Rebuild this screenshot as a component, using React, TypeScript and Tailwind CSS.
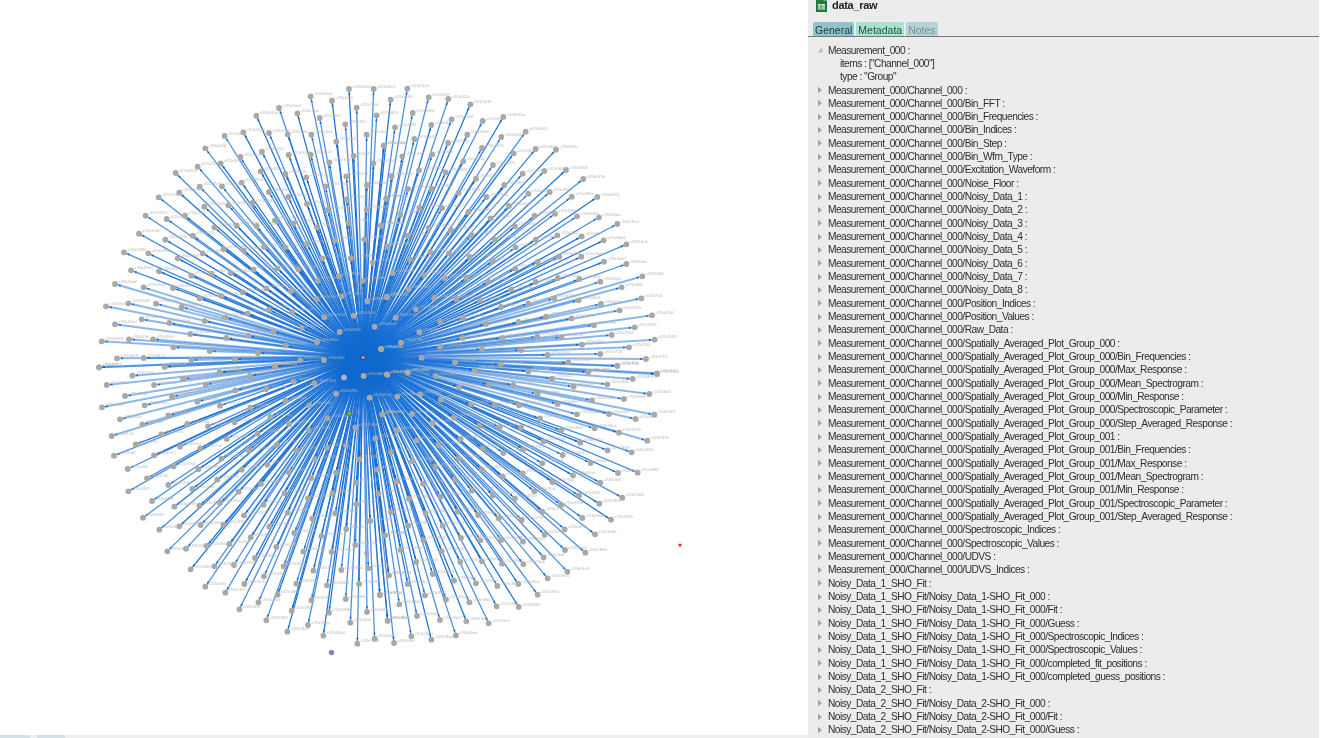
import React from 'react';

// node positions read off the graph, in 3x crop coordinates, one list per quadrant
const quadrants: { ox: number; oy: number; pts: number[] }[] = [
  {
    ox: 90,
    oy: 75,
    pts: [777,42,851,42,662,64,726,77,800,98,567,99,622,115,689,129,860,121,499,122,766,148,537,174,593,178,664,179,830,179,460,172,404,183,739,200,882,212,346,220,516,230,596,240,662,239,451,246,791,243,718,262,850,265,392,265,323,275,257,294,512,289,586,297,769,304,649,307,706,334,831,330,455,323,396,334,329,335,268,353,206,367,537,351,595,366,770,373,889,371,487,384,651,387,415,391,343,395,167,422,230,432,285,422,713,405,830,403,555,436,610,445,776,443,440,452,500,453,373,457,681,457,873,452,147,476,226,494,309,482,735,496,823,493,522,516,461,526,401,522,586,517,651,507,892,514,102,532,175,535,263,550,338,535,697,550,782,550,848,563,123,586,207,589,304,602,364,596,422,594,491,584,562,580,625,583,75,627,161,637,249,639,529,640,603,648,683,617,747,603,818,617,459,652,394,663,329,670,755,664,680,672,890,666,832,678,48,694,115,685,198,686,275,696,606,711,537,704,473,715,406,727,344,738,703,727,791,722,155,733,238,744,75,748,854,755,635,759,550,769,749,771,475,782,409,789,301,777,117,793,189,793,35,799,250,817,359,828,504,834,587,812,681,801,874,822,81,850,161,849,304,855,435,853,631,856,702,855,27,877,224,875,555,874,389,892],
  },
  {
    ox: 380,
    oy: 75,
    pts: [82,41,32,74,146,67,205,72,271,88,98,114,308,138,370,126,215,133,45,157,154,150,437,170,103,192,262,179,364,186,11,212,204,204,306,219,467,222,528,224,157,238,67,244,401,235,250,259,339,270,558,285,493,288,117,286,197,292,35,303,428,296,288,311,610,312,509,351,373,330,84,342,155,341,236,353,445,356,575,365,652,366,19,371,319,366,118,399,186,399,387,393,61,419,265,411,525,416,464,422,591,424,657,427,332,430,4,452,146,459,405,454,712,447,213,465,83,483,275,480,532,481,605,484,344,494,467,494,671,496,739,508,23,514,151,531,207,535,407,517,269,546,90,553,339,558,538,545,604,545,473,561,672,560,739,567,133,601,38,594,195,609,259,608,325,619,406,581,534,609,467,621,598,612,661,620,787,604,725,637,394,643,86,643,21,665,163,669,229,672,301,676,445,685,523,670,596,676,663,687,784,670,363,696,108,703,719,706,47,728,181,741,250,729,318,747,416,741,498,725,575,730,816,721,642,751,764,757,118,771,63,803,248,789,367,789,472,785,545,787,695,780,824,794,606,809,180,815,307,822,423,825,747,817,503,840,661,837,125,848,798,852,3,822,225,862,362,868,565,862,712,872,285,884,445,889,625,891,831,895,83,892,21,898],
  },
  {
    ox: 90,
    oy: 365,
    pts: [27,7,224,5,556,5,127,32,50,60,192,60,279,42,347,59,389,22,480,32,611,50,673,55,105,93,246,95,436,76,529,72,738,86,36,127,164,121,322,110,390,122,481,128,586,106,658,121,839,98,90,163,157,178,235,151,292,177,354,184,434,172,541,156,597,177,712,160,878,148,65,213,137,238,214,208,270,245,331,250,410,222,503,206,561,239,656,196,796,188,856,220,72,272,113,312,192,271,251,304,394,281,476,256,619,257,711,248,808,283,171,340,235,360,325,313,382,344,455,314,532,299,674,283,596,322,863,314,115,379,186,408,307,372,446,380,513,357,664,339,738,323,799,353,253,425,328,422,390,414,584,384,654,400,727,385,866,386,159,458,208,494,268,484,332,480,400,479,462,451,521,419,593,443,736,445,799,418,841,468,667,461,232,559,288,551,350,543,418,537,482,517,538,485,613,504,694,513,769,492,885,511,796,540,302,613,373,604,432,600,495,579,559,546,640,560,725,561,346,665,406,683,463,657,522,634,581,604,670,617,754,615,835,610,896,631,448,733,505,712,563,689,619,656,711,661,807,657,869,690,529,766,605,737,664,706,767,702,717,743,831,741,893,767,592,800,654,780,781,773,700,812,802,836,854,821,821,33,892,29],
  },
  {
    ox: 380,
    oy: 365,
    pts: [84,23,167,33,285,15,445,19,625,21,831,28,712,3,516,41,758,42,237,67,327,58,400,60,581,65,682,58,808,87,732,102,473,87,636,106,52,95,121,88,183,104,274,118,344,120,417,121,533,117,591,148,687,147,767,162,823,149,7,148,96,147,222,158,480,160,158,174,298,183,359,187,423,188,544,196,644,190,717,203,802,227,50,196,110,226,175,240,242,222,491,229,601,233,683,256,755,262,33,261,308,250,370,264,430,253,548,270,96,289,236,281,487,295,632,294,714,324,773,323,166,306,305,314,368,334,428,325,579,331,517,351,661,353,50,349,129,356,225,344,275,377,338,392,405,401,463,379,597,392,727,398,658,416,87,402,182,395,33,441,137,445,233,440,294,450,356,460,425,465,487,440,543,420,607,459,693,464,84,482,188,482,15,511,130,526,243,519,301,526,364,525,429,530,494,509,554,493,645,508,62,555,185,559,241,591,306,589,366,596,430,598,491,577,555,555,616,563,109,591,27,631,158,627,222,647,288,655,352,663,415,657,503,640,562,620,83,657,0,690,135,691,198,704,268,712,350,724,416,726,473,689,58,718,23,767,111,753,180,765,259,769,326,775,94,814,154,824,228,811,42,834],
  },
];

const nodes: { x: number; y: number }[] = [];
quadrants.forEach((q) => {
  for (let i = 0; i < q.pts.length; i += 2) {
    nodes.push({ x: q.ox + q.pts[i] / 3, y: q.oy + q.pts[i + 1] / 3 });
  }
});

const HUB = { x: 363, y: 357 };

const NetworkGraph = () => (
  <svg width="808" height="735" viewBox="0 0 808 735" className="block blur-[0.45px]">
    <defs>
      <radialGradient id="hubGlow">
        <stop offset="0.4" stopColor="#0f68cd" />
        <stop offset="1" stopColor="#0f68cd" stopOpacity="0" />
      </radialGradient>
    </defs>
    <g stroke="#1c72d6" fill="none">
      {nodes.map((n, i) => {
        const flat = Math.abs(n.y - HUB.y) / Math.max(Math.abs(n.x - HUB.x), 1) < 0.32;
        return (
          <line
            key={i}
            x1={HUB.x}
            y1={HUB.y}
            x2={n.x}
            y2={n.y}
            strokeWidth={flat ? 2 : 1.25}
            strokeOpacity={flat ? 0.5 : i % 3 === 0 ? 1 : 0.8}
          />
        );
      })}
    </g>
    <circle cx="363" cy="364" r="46" fill="url(#hubGlow)" />
    <g fill="#0f66cc">
      {nodes.map((n, i) => {
        const a = Math.atan2(n.y - HUB.y, n.x - HUB.x);
        const tipX = n.x - 3.2 * Math.cos(a);
        const tipY = n.y - 3.2 * Math.sin(a);
        const bx = tipX - 2.6 * Math.cos(a);
        const by = tipY - 2.6 * Math.sin(a);
        const px = 1.2 * Math.sin(a);
        const py = -1.2 * Math.cos(a);
        return (
          <polygon
            key={i}
            points={`${tipX},${tipY} ${bx + px},${by + py} ${bx - px},${by - py}`}
          />
        );
      })}
    </g>
    <g fill="#a8a8a6">
      {nodes.map((n, i) => (
        <circle key={i} cx={n.x} cy={n.y} r="2.9" />
      ))}
    </g>
    <g fill="#b5b5b5" fontSize="3" fontFamily="'Liberation Sans', sans-serif">
      {nodes.map((n, i) => (
        <text key={i} x={n.x + 3.5} y={n.y - 1.2}>
          {`a7f23e1f${(0x4e00 + i * 37).toString(16)}`}
        </text>
      ))}
    </g>

    {/* highlighted nodes */}
    <circle cx="363" cy="357.5" r="2.4" fill="#9a8fc0" stroke="#0b3f6e" strokeWidth="0.9" />
    <circle cx="344" cy="377.5" r="2.4" fill="#b9a8c8" stroke="#c9c9d8" strokeWidth="0.8" />
    <circle cx="349.5" cy="413.5" r="2.4" fill="#6fbf3a" stroke="#2e7d3c" strokeWidth="0.9" />
    <circle cx="346" cy="446" r="2.4" fill="#b3a5c8" />
    <circle cx="366.5" cy="553" r="2.4" fill="#a59fd0" />
    <circle cx="331.5" cy="652.5" r="2.6" fill="#7d7fc4" stroke="#a5a5c5" strokeWidth="0.7" />
    <circle cx="680" cy="545" r="1.5" fill="#f01818" />
  </svg>
);

const FileIcon = () => (
  <svg width="13" height="13" viewBox="0 0 13 13">
    <path d="M1 -2h7.5l3.5 3.5v11.5h-11z" fill="#1f7a3c" />
    <path d="M8.5 -2v3.5h3.5z" fill="#b7dcc2" />
    <path d="M3 5h7v5.5h-7z" fill="#e9f5ec" />
    <path d="M3 7h7M3 9h7M6 5v5.5" stroke="#1f7a3c" strokeWidth="0.7" />
  </svg>
);

const Arrow = ({ open }: { open?: boolean }) => (
  <svg width="8" height="8" viewBox="0 0 8 8" className="shrink-0">
    {open ? (
      <path d="M6.5 1.5v5h-5z" fill="#b8b8b8" />
    ) : (
      <path d="M2 .8l4 3.2-4 3.2z" fill="#a2a2a2" />
    )}
  </svg>
);

const C = 'Measurement_000/Channel_000';
const S0 = `${C}/Spatially_Averaged_Plot_Group_000`;
const S1 = `${C}/Spatially_Averaged_Plot_Group_001`;
const N1 = 'Noisy_Data_1_SHO_Fit/Noisy_Data_1-SHO_Fit_000';
const N2 = 'Noisy_Data_2_SHO_Fit/Noisy_Data_2-SHO_Fit_000';

const rows = [
  C,
  `${C}/Bin_FFT`,
  `${C}/Bin_Frequencies`,
  `${C}/Bin_Indices`,
  `${C}/Bin_Step`,
  `${C}/Bin_Wfm_Type`,
  `${C}/Excitation_Waveform`,
  `${C}/Noise_Floor`,
  `${C}/Noisy_Data_1`,
  `${C}/Noisy_Data_2`,
  `${C}/Noisy_Data_3`,
  `${C}/Noisy_Data_4`,
  `${C}/Noisy_Data_5`,
  `${C}/Noisy_Data_6`,
  `${C}/Noisy_Data_7`,
  `${C}/Noisy_Data_8`,
  `${C}/Position_Indices`,
  `${C}/Position_Values`,
  `${C}/Raw_Data`,
  S0,
  `${S0}/Bin_Frequencies`,
  `${S0}/Max_Response`,
  `${S0}/Mean_Spectrogram`,
  `${S0}/Min_Response`,
  `${S0}/Spectroscopic_Parameter`,
  `${S0}/Step_Averaged_Response`,
  S1,
  `${S1}/Bin_Frequencies`,
  `${S1}/Max_Response`,
  `${S1}/Mean_Spectrogram`,
  `${S1}/Min_Response`,
  `${S1}/Spectroscopic_Parameter`,
  `${S1}/Step_Averaged_Response`,
  `${C}/Spectroscopic_Indices`,
  `${C}/Spectroscopic_Values`,
  `${C}/UDVS`,
  `${C}/UDVS_Indices`,
  'Noisy_Data_1_SHO_Fit',
  N1,
  `${N1}/Fit`,
  `${N1}/Guess`,
  `${N1}/Spectroscopic_Indices`,
  `${N1}/Spectroscopic_Values`,
  `${N1}/completed_fit_positions`,
  `${N1}/completed_guess_positions`,
  'Noisy_Data_2_SHO_Fit',
  N2,
  `${N2}/Fit`,
  `${N2}/Guess`,
];

const Row = ({ label, open }: { label: string; open?: boolean }) => (
  <div className="flex h-[13.33px] items-center gap-[4px] pl-[8px] whitespace-nowrap">
    <Arrow open={open} />
    <span>{label} :</span>
  </div>
);

export default function App() {
  return (
    <div className="flex h-[738px] w-[1320px] overflow-hidden bg-white font-['Liberation_Sans',sans-serif] text-[#2e2e2e]">
      {/* Graph canvas */}
      <div className="flex w-[808px] flex-col">
        <div className="flex-1">
          <NetworkGraph />
        </div>
        <div className="flex h-[3px] gap-[7px] bg-[#efefef]">
          <div className="h-full w-[30px] bg-[#d4e0e6]" />
          <div className="h-full w-[28px] bg-[#d4e0e6]" />
        </div>
      </div>

      {/* Metadata panel */}
      <div className="flex w-[511px] flex-col overflow-hidden bg-[#ececec] text-[10.2px] tracking-[-0.52px] blur-[0.3px]">
        <div className="flex h-[11px] items-center gap-[4px] pl-[7px]">
          <FileIcon />
          <span className="text-[11px] font-bold tracking-[-0.3px] text-[#222]">data_raw</span>
        </div>
        <div className="mt-[11px] flex h-[15px] gap-[2px] border-b border-[#777] pl-[5px] text-[10.5px] tracking-normal">
          <div className="rounded-t-[2px] bg-[#8fc3cd] px-[2px] pt-[1px] text-[#24383c]">General</div>
          <div className="rounded-t-[2px] bg-[#a6e4cd] px-[2px] pt-[1px] text-[#2f4a42]">Metadata</div>
          <div className="rounded-t-[2px] bg-[#b4d3d9] px-[2px] pt-[1px] text-[#7c8d91]">Notes</div>
        </div>
        <div className="pt-[6.5px]">
          <Row label="Measurement_000" open />
          <div className="flex h-[13.33px] items-center pl-[32px]">items : ["Channel_000"]</div>
          <div className="flex h-[13.33px] items-center pl-[32px]">type : "Group"</div>
          {rows.map((r) => (
            <Row key={r} label={r} />
          ))}
        </div>
      </div>
      <div className="w-px bg-white" />
    </div>
  );
}
